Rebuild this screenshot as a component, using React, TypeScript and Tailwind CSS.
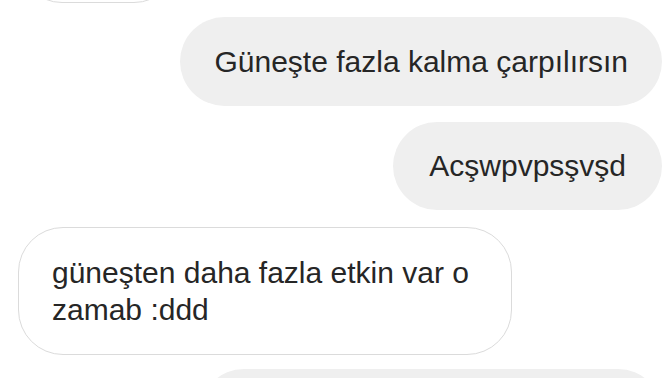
import React from "react";

export default function App() {
  return (
    <div
      className="w-[672px] h-[378px] overflow-hidden bg-white text-[#262626]"
      style={{ fontFamily: '"Liberation Sans", Arial, sans-serif' }}
    >
      <div className="flex flex-col">
        {/* partially visible incoming bubble at top */}
        <div className="self-start ml-[18px] -mt-[85px] w-[160px] h-[88px] rounded-[44px] border-[1.5px] border-[#dbdbdb] bg-white" />

        <div className="self-end mr-[10px] mt-[14px] rounded-[45px] bg-[#efefef] px-[34px] py-[26px] text-[30px] leading-[37px] whitespace-nowrap">
          Güneşte fazla kalma çarpılırsın
        </div>

        <div className="self-end mr-[10px] mt-[16px] rounded-[44px] bg-[#efefef] px-[36px] py-[26px] text-[30px] leading-[36px] whitespace-nowrap">
          Acşwpvpsşvşd
        </div>

        <div className="self-start ml-[18px] mt-[17px] max-w-[494px] rounded-[45px] border-[1.5px] border-[#dbdbdb] bg-white px-[33px] py-[26px] text-[30px] leading-[37px]">
          güneşten daha fazla etkin var o zamab :ddd
        </div>

        <div className="self-end mr-[10px] mt-[14px] w-[462px] h-[88px] rounded-[44px] bg-[#efefef]" />
      </div>
    </div>
  );
}
